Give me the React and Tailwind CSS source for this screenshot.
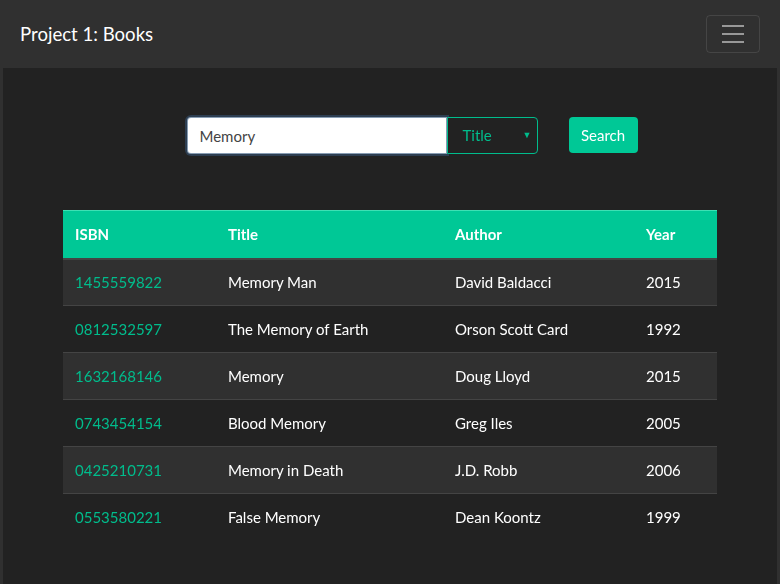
import { useState } from "react";

const books = [
  { isbn: "1455559822", title: "Memory Man", author: "David Baldacci", year: "2015" },
  { isbn: "0812532597", title: "The Memory of Earth", author: "Orson Scott Card", year: "1992" },
  { isbn: "1632168146", title: "Memory", author: "Doug Lloyd", year: "2015" },
  { isbn: "0743454154", title: "Blood Memory", author: "Greg Iles", year: "2005" },
  { isbn: "0425210731", title: "Memory in Death", author: "J.D. Robb", year: "2006" },
  { isbn: "0553580221", title: "False Memory", author: "Dean Koontz", year: "1999" },
];

export default function App() {
  const [query, setQuery] = useState("Memory");

  return (
    <div
      className="min-h-[584px] w-full bg-[#222222] text-white flex flex-col"
      style={{ fontFamily: "Lato, 'Noto Sans', sans-serif" }}
    >
      {/* Navbar */}
      <nav className="h-[68px] bg-[#303030] flex items-center justify-between pl-5 pr-5">
        <span className="text-[18.6px] text-white pt-[2px]">Project 1: Books</span>
        <button className="w-[54px] h-[38px] border border-white/10 rounded flex flex-col items-center justify-center gap-[6px]">
          <span className="block w-[22px] h-[2px] bg-white/50"></span>
          <span className="block w-[22px] h-[2px] bg-white/50"></span>
          <span className="block w-[22px] h-[2px] bg-white/50"></span>
        </button>
      </nav>

      {/* Body */}
      <div className="flex-1 border-x-[3px] border-[#303030] min-h-[516px]">
        {/* Search form */}
        <div className="flex justify-center pt-[49px] pl-[44px]">
          <div className="flex h-[37px]">
            <input
              type="text"
              value={query}
              autoFocus
              onChange={(e) => setQuery(e.target.value)}
              className="w-[260px] h-[37px] bg-white text-[#444] text-[15px] px-3 rounded-l-[4px] outline-none ring-2 ring-[#375a7f]/50 border border-[#375a7f]/60"
            />
            <div className="relative w-[91px] h-[37px] border border-[#00bc8c] rounded-r-[4px] bg-[#222] flex items-center pl-[15px]">
              <span className="text-[15px] text-[#00bc8c]">Title</span>
              <span className="absolute right-[5px] top-[10px] text-[9px] text-[#00bc8c]">▼</span>
            </div>
          </div>
          <button className="ml-[31px] h-[36px] w-[69px] bg-[#00c896] rounded-[4px] text-[15px] text-white">
            Search
          </button>
        </div>

        {/* Results table */}
        <div className="px-[60px] pt-[56px]">
          <table className="w-[654px] border-collapse text-[15px]">
            <thead>
              <tr className="bg-[#00c896] border-t border-[#3de0b4]">
                <th className="w-[153px] h-[48px] px-3 text-left font-bold border-b-2 border-[#444]">ISBN</th>
                <th className="w-[227px] px-3 text-left font-bold border-b-2 border-[#444]">Title</th>
                <th className="w-[191px] px-3 text-left font-bold border-b-2 border-[#444]">Author</th>
                <th className="px-3 text-left font-bold border-b-2 border-[#444]">Year</th>
              </tr>
            </thead>
            <tbody>
              {books.map((b, i) => (
                <tr
                  key={b.isbn}
                  className={`${i % 2 === 0 ? "bg-[#303030]" : ""} ${i !== books.length - 1 ? "border-b border-[#444]" : ""}`}
                >
                  <td className="h-[47px] px-3 text-[#00bc8c]">{b.isbn}</td>
                  <td className="px-3">{b.title}</td>
                  <td className="px-3">{b.author}</td>
                  <td className="px-3">{b.year}</td>
                </tr>
              ))}
            </tbody>
          </table>
        </div>
      </div>
    </div>
  );
}
